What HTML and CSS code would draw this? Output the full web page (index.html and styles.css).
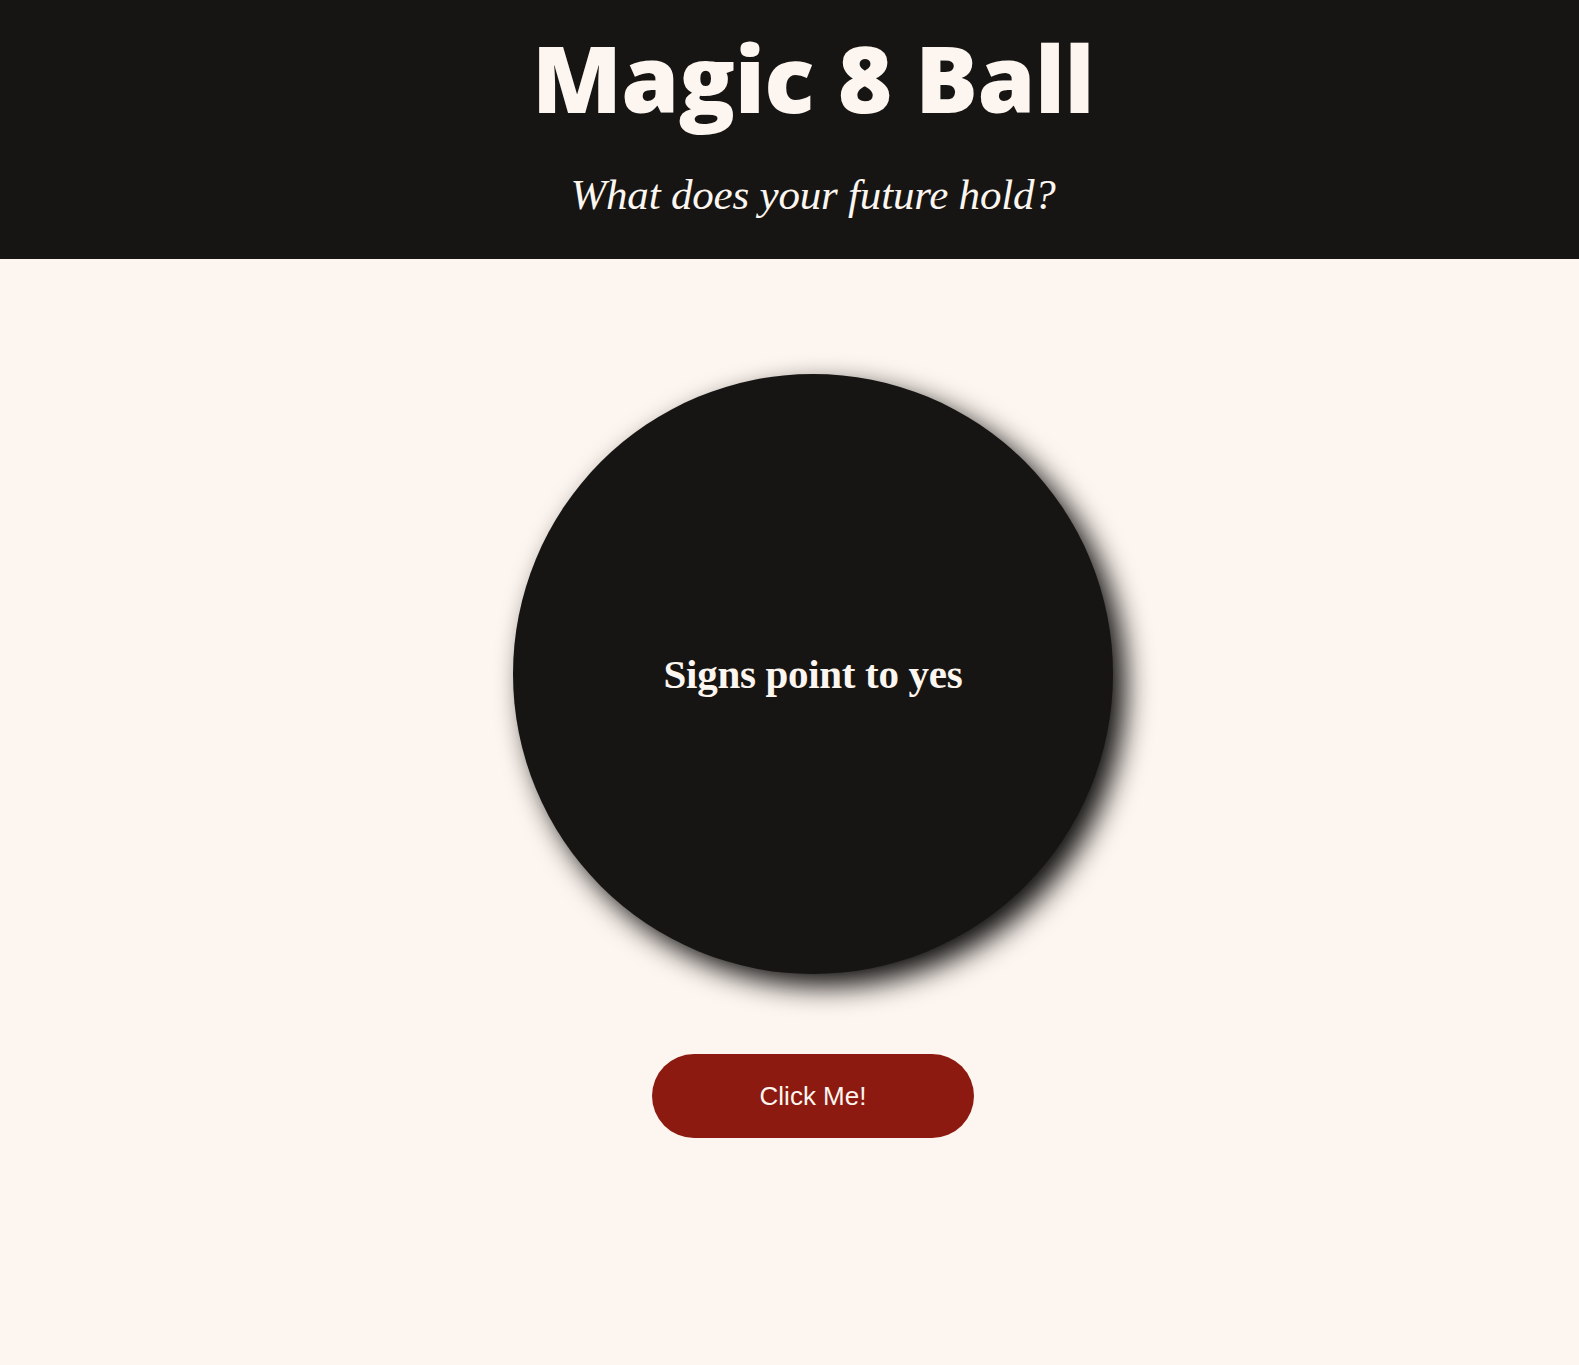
FILE: index.html
```html
<!DOCTYPE html>
<html lang="en">
<head>
<meta charset="utf-8">
<title>Magic 8 Ball</title>
<link rel="stylesheet" href="styles.css">
</head>
<body>
<header class="site-header">
  <div class="header-inner">
    <h1 class="title">Magic 8 Ball</h1>
    <p class="subtitle">What does your future hold?</p>
  </div>
</header>
<main class="stage">
  <div class="ball">
    <p class="answer">Signs point to yes</p>
  </div>
  <button class="shake-btn" type="button">Click Me!</button>
</main>
</body>
</html>
```

FILE: styles.css
```css
html, body {
  margin: 0;
  padding: 0;
}
body {
  background: #fdf5ef;
  color: #fdf5ef;
  min-height: 1365px;
}
.site-header {
  background: #161513;
  height: 259px;
  box-sizing: border-box;
  padding-left: 47px;
}
.header-inner {
  display: flex;
  flex-direction: column;
  align-items: center;
}
.title {
  margin: 0;
  padding-top: 22px;
  font-family: "Open Sans", sans-serif;
  font-weight: 800;
  font-size: 93px;
  line-height: 110px;
  letter-spacing: -0.5px;
}
.subtitle {
  margin: 0;
  margin-top: 39px;
  font-family: "Liberation Serif", serif;
  font-style: italic;
  font-size: 43px;
  line-height: 48px;
  letter-spacing: -0.2px;
}
.stage {
  display: flex;
  flex-direction: column;
  align-items: center;
  padding-left: 47px;
  padding-top: 115px;
}
.ball {
  width: 600px;
  height: 600px;
  border-radius: 50%;
  background: #161513;
  box-shadow: 12px 12px 28px rgba(0, 0, 0, 0.95);
  display: flex;
  align-items: center;
  justify-content: center;
}
.answer {
  margin: 0;
  font-family: "Liberation Serif", serif;
  font-weight: bold;
  font-size: 41px;
  letter-spacing: -0.3px;
}
.shake-btn {
  margin-top: 80px;
  width: 322px;
  height: 84px;
  border: none;
  border-radius: 42px;
  background: #8c1a10;
  color: #fdf5ef;
  font-family: "Liberation Sans", Arial, sans-serif;
  font-size: 26px;
}
```
